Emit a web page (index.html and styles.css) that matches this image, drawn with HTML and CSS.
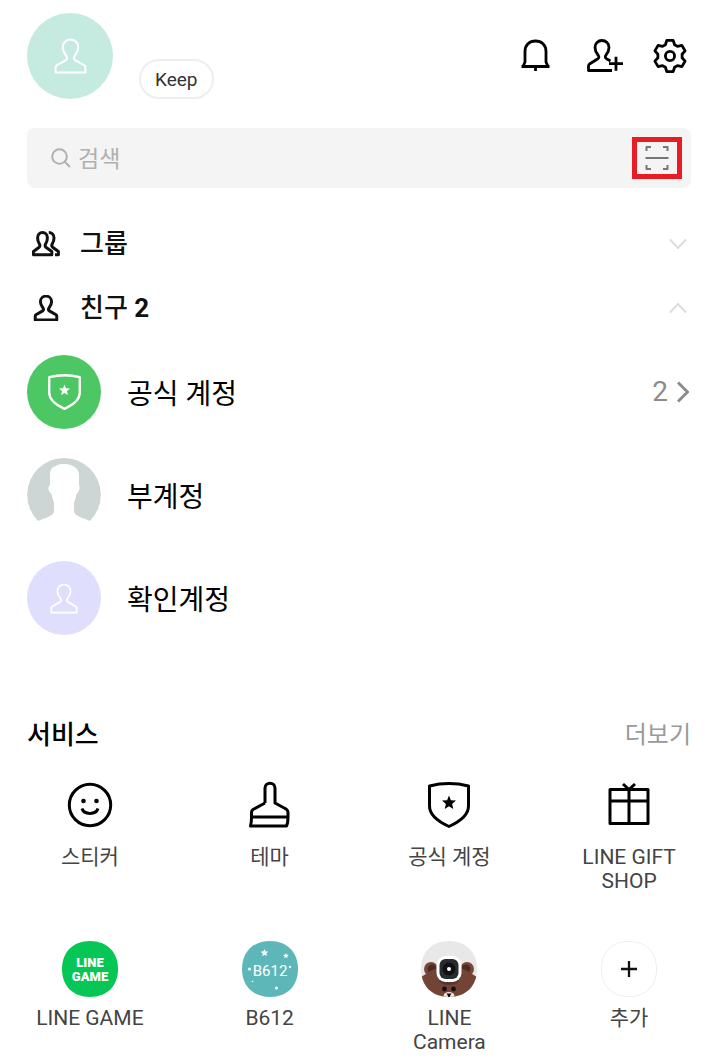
FILE: index.html
```html
<!DOCTYPE html>
<html lang="ko">
<head>
  <meta charset="UTF-8">
  <meta name="viewport" content="width=device-width, initial-scale=1.0">
  <title>LINE</title>
  <link rel="stylesheet" href="styles.css">
</head>
<body>
  <svg class="sprite" aria-hidden="true">
    <symbol id="person" viewBox="0 0 32 35">
      <path d="M1.5 33.5V28.5Q1.5 27.3 2.5 26.7L11.5 21.4C13 20.4 13 19 12 17.5C10 15 8.5 12 8.5 9C8.5 4.7 11.8 1.5 16 1.5S23.5 4.7 23.5 9C23.5 12 22 15 20 17.5C19 19 19 20.4 20.5 21.4L29.5 26.7Q30.5 27.3 30.5 28.5V33.5Z"/>
    </symbol>
    <symbol id="shield" viewBox="0 0 42 46">
      <path d="M1.5 4Q21-.8 40.5 4V24C40.5 33 32 39.5 21 44.5C10 39.5 1.5 33 1.5 24Z"/>
      <path class="solid" d="M21 13.5l1.9 4.8 5.1.3-3.9 3.3 1.2 5-4.3-2.7-4.3 2.7 1.2-5-3.9-3.3 5.1-.3z"/>
    </symbol>
  </svg>

  <header class="header">
    <div class="avatar profile">
      <svg class="icon" width="33" height="36"><use href="#person"/></svg>
    </div>
    <button class="keep">Keep</button>
    <div class="actions">
      <button class="bell" aria-label="알림">
        <svg class="icon" width="30" height="34" viewBox="0 0 30 34"><path d="M2 27.5L4 23V12.5C4 6 8.5 2 14.5 2S25 6 25 12.5V23L27 27.5M.5 27.5H28.5M14.5 27.5V32"/></svg>
      </button>
      <button aria-label="친구 추가">
        <svg class="icon" width="38" height="34" viewBox="0 0 38 34"><path d="M25 31.5H1.5V27Q1.5 25.8 2.5 25L10.5 20C12.5 18.7 12 17.3 11 16C9.2 13.8 8 11.3 8 8.5C8 4.5 11 1.5 15 1.5S22 4.5 22 8.5C22 11.3 20.8 13.8 19 16C18 17.5 18 18.7 19.5 19.7L23.5 22M22 24.7H36M29 17.7V31.7"/></svg>
      </button>
      <button aria-label="설정">
        <svg class="icon" width="34" height="34" viewBox="-17 -17 34 34"><path d="M-3.2-15.6H3.2L4.6-11.3 7.5-9.6 11.9-10.6 15.1-5.1 12.1-1.7V1.7L15.1 5.1 11.9 10.6 7.5 9.6 4.6 11.3 3.2 15.6H-3.2L-4.6 11.3-7.5 9.6-11.9 10.6-15.1 5.1-12.1 1.7V-1.7L-15.1-5.1-11.9-10.6-7.5-9.6-4.6-11.3Z"/><circle r="4.6"/></svg>
      </button>
    </div>
  </header>

  <main>
    <form class="search">
      <label for="search" aria-label="검색">
        <svg class="icon" width="20" height="20" viewBox="0 0 20 20"><circle cx="8.5" cy="8.5" r="7.3"/><path d="M13.7 13.7L19 19"/></svg>
      </label>
      <input type="text" id="search" placeholder="검색">
      <button class="scan" type="button" aria-label="QR 스캔">
        <svg class="icon" width="24" height="26" viewBox="0 0 24 26"><path d="M1.5 6V2H6M18 2H22.5V6M1.5 20V24H6M18 24H22.5V20M.5 13H23.5"/></svg>
      </button>
    </form>

    <button class="section">
      <svg class="icon" width="28" height="26" viewBox="0 0 28 26"><path d="M1.5 23.7V20.5L6.8 16.5C8.3 15.3 8.2 14.4 7.4 13C6.2 11 5.6 9.2 5.6 7C5.6 3.8 7.7 1.5 10.5 1.5S15.4 3.8 15.4 7C15.4 9.2 14.8 11 13.6 13C12.8 14.4 12.7 15.3 14.2 16.5L19.8 20.5V23.7ZM16.8 1.5C19.8 1.5 22 3.8 22 7C22 9.2 21.4 11 20.2 13C19.4 14.4 19.6 15.5 21 16.5L26.4 20.5V23.7H23"/></svg>
      <span>그룹</span>
      <svg class="icon chevron" width="18" height="12" viewBox="0 0 18 12"><path d="M1 1.5L9 10L17 1.5"/></svg>
    </button>
    <button class="section">
      <svg class="icon small" width="28" height="26"><use href="#person"/></svg>
      <span>친구 <b>2</b></span>
      <svg class="icon chevron" width="18" height="12" viewBox="0 0 18 12"><path d="M1 10.5L9 2L17 10.5"/></svg>
    </button>

    <ul class="friends">
      <li>
        <a href="#">
          <span class="avatar official"><svg class="icon" width="33" height="36"><use href="#shield"/></svg></span>
          <span class="name">공식 계정</span>
          <span class="count">2
            <svg class="icon" width="12" height="22" viewBox="0 0 12 22"><path d="M1 1.5L10.5 11L1 20.5"/></svg>
          </span>
        </a>
      </li>
      <li>
        <a href="#">
          <span class="avatar"><svg width="74" height="74" viewBox="0 0 74 74"><path fill="#ced5d5" d="M11 63A37 37 0 1 1 63 63C57 60 49 59 47 54V45C48 42 49 39 49.5 36C52 34 53.5 29 52 27V17C52 10 45 6 38 6C34 6 31 6 28 8.5C25 9 23 12 23 16V27C20 29 21.5 34 24.5 36C25 39 26 42 27 45V54C25 59 17 60 11 63Z"/></svg></span>
          <span class="name">부계정</span>
        </a>
      </li>
      <li>
        <a href="#">
          <span class="avatar lilac"><svg class="icon" width="28" height="31"><use href="#person"/></svg></span>
          <span class="name">확인계정</span>
        </a>
      </li>
    </ul>

    <div class="services-head">
      <h2>서비스</h2>
      <a href="#">더보기</a>
    </div>
  </main>

  <nav class="services">
    <a class="service" href="#">
      <svg class="icon" width="48" height="48" viewBox="0 0 48 48"><circle cx="24" cy="24" r="20.7"/><path d="M16 27.5C18 34 30 34 32 27.5"/><circle class="solid" cx="17.5" cy="20" r="2.3"/><circle class="solid" cx="30.5" cy="20" r="2.3"/></svg>
      스티커
    </a>
    <a class="service" href="#">
      <svg class="icon" width="48" height="48" viewBox="0 0 48 48"><path d="M19 22V7C19 .5 29 .5 29 7V22L40.5 28.3Q42 29.5 42 31.5V36C42 40 42 42 40.5 45H4.5C5.5 42 5.5 40 5.5 36V31.5Q5.5 29.5 7 28.5L19 22M5.5 36H42"/></svg>
      테마
    </a>
    <a class="service" href="#">
      <svg class="icon" width="42" height="48"><use href="#shield"/></svg>
      공식 계정
    </a>
    <a class="service" href="#">
      <svg class="icon" width="48" height="48" viewBox="0 0 48 48"><path d="M5 8.5H43V42.5H5ZM5 20H43M24 8.5V42.5M18 3L24 8.5L30 3"/></svg>
      LINE GIFT<br>SHOP
    </a>
    <a class="service app" href="#">
      <svg width="56" height="56" viewBox="0 0 56 56">
        <path fill="#06c755" d="M28 0C45 0 56 11 56 28S45 56 28 56 0 45 0 28 11 0 28 0Z"/>
        <text class="logo-game" x="28" y="26">LINE</text>
        <text class="logo-game" x="28" y="40">GAME</text>
      </svg>
      LINE GAME
    </a>
    <a class="service app" href="#">
      <svg width="56" height="56" viewBox="0 0 56 56">
        <path fill="#5db7b9" d="M28 0C45 0 56 11 56 28S45 56 28 56 0 45 0 28 11 0 28 0Z"/>
        <text class="logo-b612" x="28" y="35">B612</text>
        <path fill="#fff" d="M22.5 8l1.2 2.4 2.6.2-2 1.8.7 2.6-2.4-1.3-2.3 1.5.4-2.7-2-1.7 2.7-.5zM44 12l.8 1.7 1.9.2-1.4 1.3.3 1.9-1.7-.9-1.7.9.3-1.9-1.4-1.3 1.9-.2z"/>
        <g fill="#fff"><circle cx="7.5" cy="28" r="1.6"/><circle cx="48" cy="26" r="1.2"/><circle cx="34.5" cy="47" r="1.5"/><circle cx="10.5" cy="40.5" r=".8"/></g>
      </svg>
      B612
    </a>
    <a class="service app" href="#">
      <svg width="56" height="56" viewBox="0 0 56 56">
        <clipPath id="tile"><path d="M28 0C45 0 56 11 56 28S45 56 28 56 0 45 0 28 11 0 28 0Z"/></clipPath>
        <g clip-path="url(#tile)">
          <path fill="#e8e8e8" d="M0 0H56V56H0Z"/>
          <g fill="#794838"><circle cx="10" cy="28" r="7"/><circle cx="46" cy="28" r="7"/></g>
          <g fill="#4d2b22"><circle cx="11" cy="28" r="4.5"/><circle cx="45" cy="28" r="4.5"/></g>
          <path fill="#734436" d="M0 36C7 32 11 28 17 27H39C45 28 49 32 56 36V56H0Z"/>
          <path fill="#55362d" d="M17 37H39Q38 44 28 44T17 37Z"/>
          <rect x="15.5" y="15" width="25" height="26" rx="9" fill="#fff"/>
          <rect x="18.5" y="18" width="19" height="20" rx="6" fill="#292c2f"/>
          <circle cx="28" cy="28" r="6.5" fill="#111"/>
          <circle cx="28" cy="28" r="2" fill="#fff"/>
          <circle cx="23.5" cy="48" r="2.4" fill="#111"/><circle cx="32.5" cy="48" r="2.4" fill="#111"/>
          <ellipse cx="28" cy="55" rx="5.5" ry="4" fill="#eee4df"/>
          <path fill="#111" d="M25.5 52.5H30.5L29 55V56H27V55Z"/>
        </g>
      </svg>
      LINE<br>Camera
    </a>
    <a class="service app" href="#">
      <svg width="56" height="56" viewBox="0 0 56 56">
        <path fill="#fff" stroke="#eee" d="M28 .5C45 .5 55.5 11 55.5 28S45 55.5 28 55.5 .5 45 .5 28 11 .5 28 .5Z"/>
        <path stroke="#111" stroke-width="2.3" d="M20 28H36M28 20V36"/>
      </svg>
      추가
    </a>
  </nav>
</body>
</html>
```
FILE: styles.css
```css
* {
  box-sizing: border-box;
}
body {
  margin: 0;
  font-family: Roboto, "Noto Sans CJK KR", sans-serif;
  background: #fff;
  color: #111;
}
button {
  padding: 0;
  border: none;
  background: none;
  font-family: inherit;
  color: inherit;
  cursor: pointer;
}
a {
  color: inherit;
  text-decoration: none;
}
svg {
  display: block;
  flex-shrink: 0;
}
.sprite {
  position: absolute;
  width: 0;
  height: 0;
}
.icon {
  fill: none;
  stroke: currentColor;
  stroke-width: 3px;
  stroke-linejoin: round;
}
.solid {
  fill: currentColor;
  stroke: none;
}
main {
  padding: 0 28px 0 27px;
}

/* header */
.header {
  display: flex;
  align-items: center;
  padding: 13px 32px 0 27px;
}
.avatar {
  display: flex;
  align-items: center;
  justify-content: center;
  flex-shrink: 0;
  width: 74px;
  height: 74px;
  border-radius: 50%;
  overflow: hidden;
  color: #fff;
}
.avatar .icon {
  stroke-width: 2px;
}
.profile {
  width: 86px;
  height: 86px;
  background: #c5ebe0;
}
.official {
  background: #4dc764;
}
.official .icon {
  stroke-width: 3px;
}
.lilac {
  background: #dfdffd;
}
.keep {
  align-self: flex-end;
  height: 40px;
  margin-left: 26px;
  padding: 0 14px;
  border: 2px solid #eee;
  border-radius: 20px;
  font-size: 19px;
  color: #333;
}
.actions {
  display: flex;
  align-items: center;
  gap: 28px;
  margin-left: auto;
  color: #000;
}
.actions .icon {
  stroke-width: 2px;
  stroke-width: 2.8px;
}
.bell {
  margin-right: 8px;
}

/* search */
.search {
  display: flex;
  align-items: center;
  height: 60px;
  margin: 29px 0 24px;
  padding: 0 9px 0 24px;
  border-radius: 8px;
  background: #f4f4f4;
}
.search label {
  color: #b0b0b0;
}
.search label .icon {
  stroke-width: 2px;
}
.search input {
  flex: 1;
  min-width: 0;
  padding: 3px 7px 0;
  border: none;
  outline: none;
  background: none;
  font-family: inherit;
  font-size: 23px;
  line-height: 36px;
}
.search input::placeholder {
  color: #b0b0b0;
}
.scan {
  display: flex;
  align-items: center;
  justify-content: center;
  width: 50px;
  height: 42px;
  border: 5px solid #e81c24;
  color: #777;
}
.scan .icon {
  stroke-width: 2px;
}

/* sections */
.section {
  display: flex;
  align-items: center;
  gap: 20px;
  width: 100%;
  height: 64px;
  padding: 0 4px 0 5px;
  font-size: 26px;
  font-weight: 500;
  line-height: 36px;
}
.section .small {
  stroke-width: 4px;
}
.section .chevron {
  margin-left: auto;
  color: #ddd;
  stroke-width: 2px;
}
.friends {
  display: grid;
  gap: 29px;
  margin: 15px 0 84px;
  padding: 0;
  list-style: none;
  font-size: 28px;
  line-height: 40px;
  color: #000;
}
.friends a {
  display: flex;
  align-items: center;
  gap: 26px;
}
.friends .name {
  padding-top: 5px;
}
.friends .count {
  display: flex;
  align-items: center;
  gap: 9px;
  margin-left: auto;
  padding-right: 2px;
  color: #8c8c8c;
}

/* services */
.services-head {
  display: flex;
  align-items: center;
  justify-content: space-between;
  line-height: 32px;
}
.services-head h2 {
  margin: 0;
  font-size: 26px;
  font-weight: 500;
  color: #000;
}
.services-head a {
  font-size: 24px;
  color: #999;
}
.services {
  display: grid;
  grid-template-columns: repeat(4, 1fr);
  row-gap: 48px;
  padding-top: 30px;
}
.service {
  display: flex;
  flex-direction: column;
  align-items: center;
  font-size: 21px;
  line-height: 24px;
  text-align: center;
  color: #444;
}
.service svg {
  margin-bottom: 16px;
}
.service .icon {
  color: #000;
}
.app svg {
  margin-bottom: 9px;
}
.logo-game {
  fill: #fff;
  font-size: 13px;
  font-weight: 900;
  text-anchor: middle;
}
.logo-b612 {
  fill: #fff;
  font-size: 15px;
  text-anchor: middle;
}
```
